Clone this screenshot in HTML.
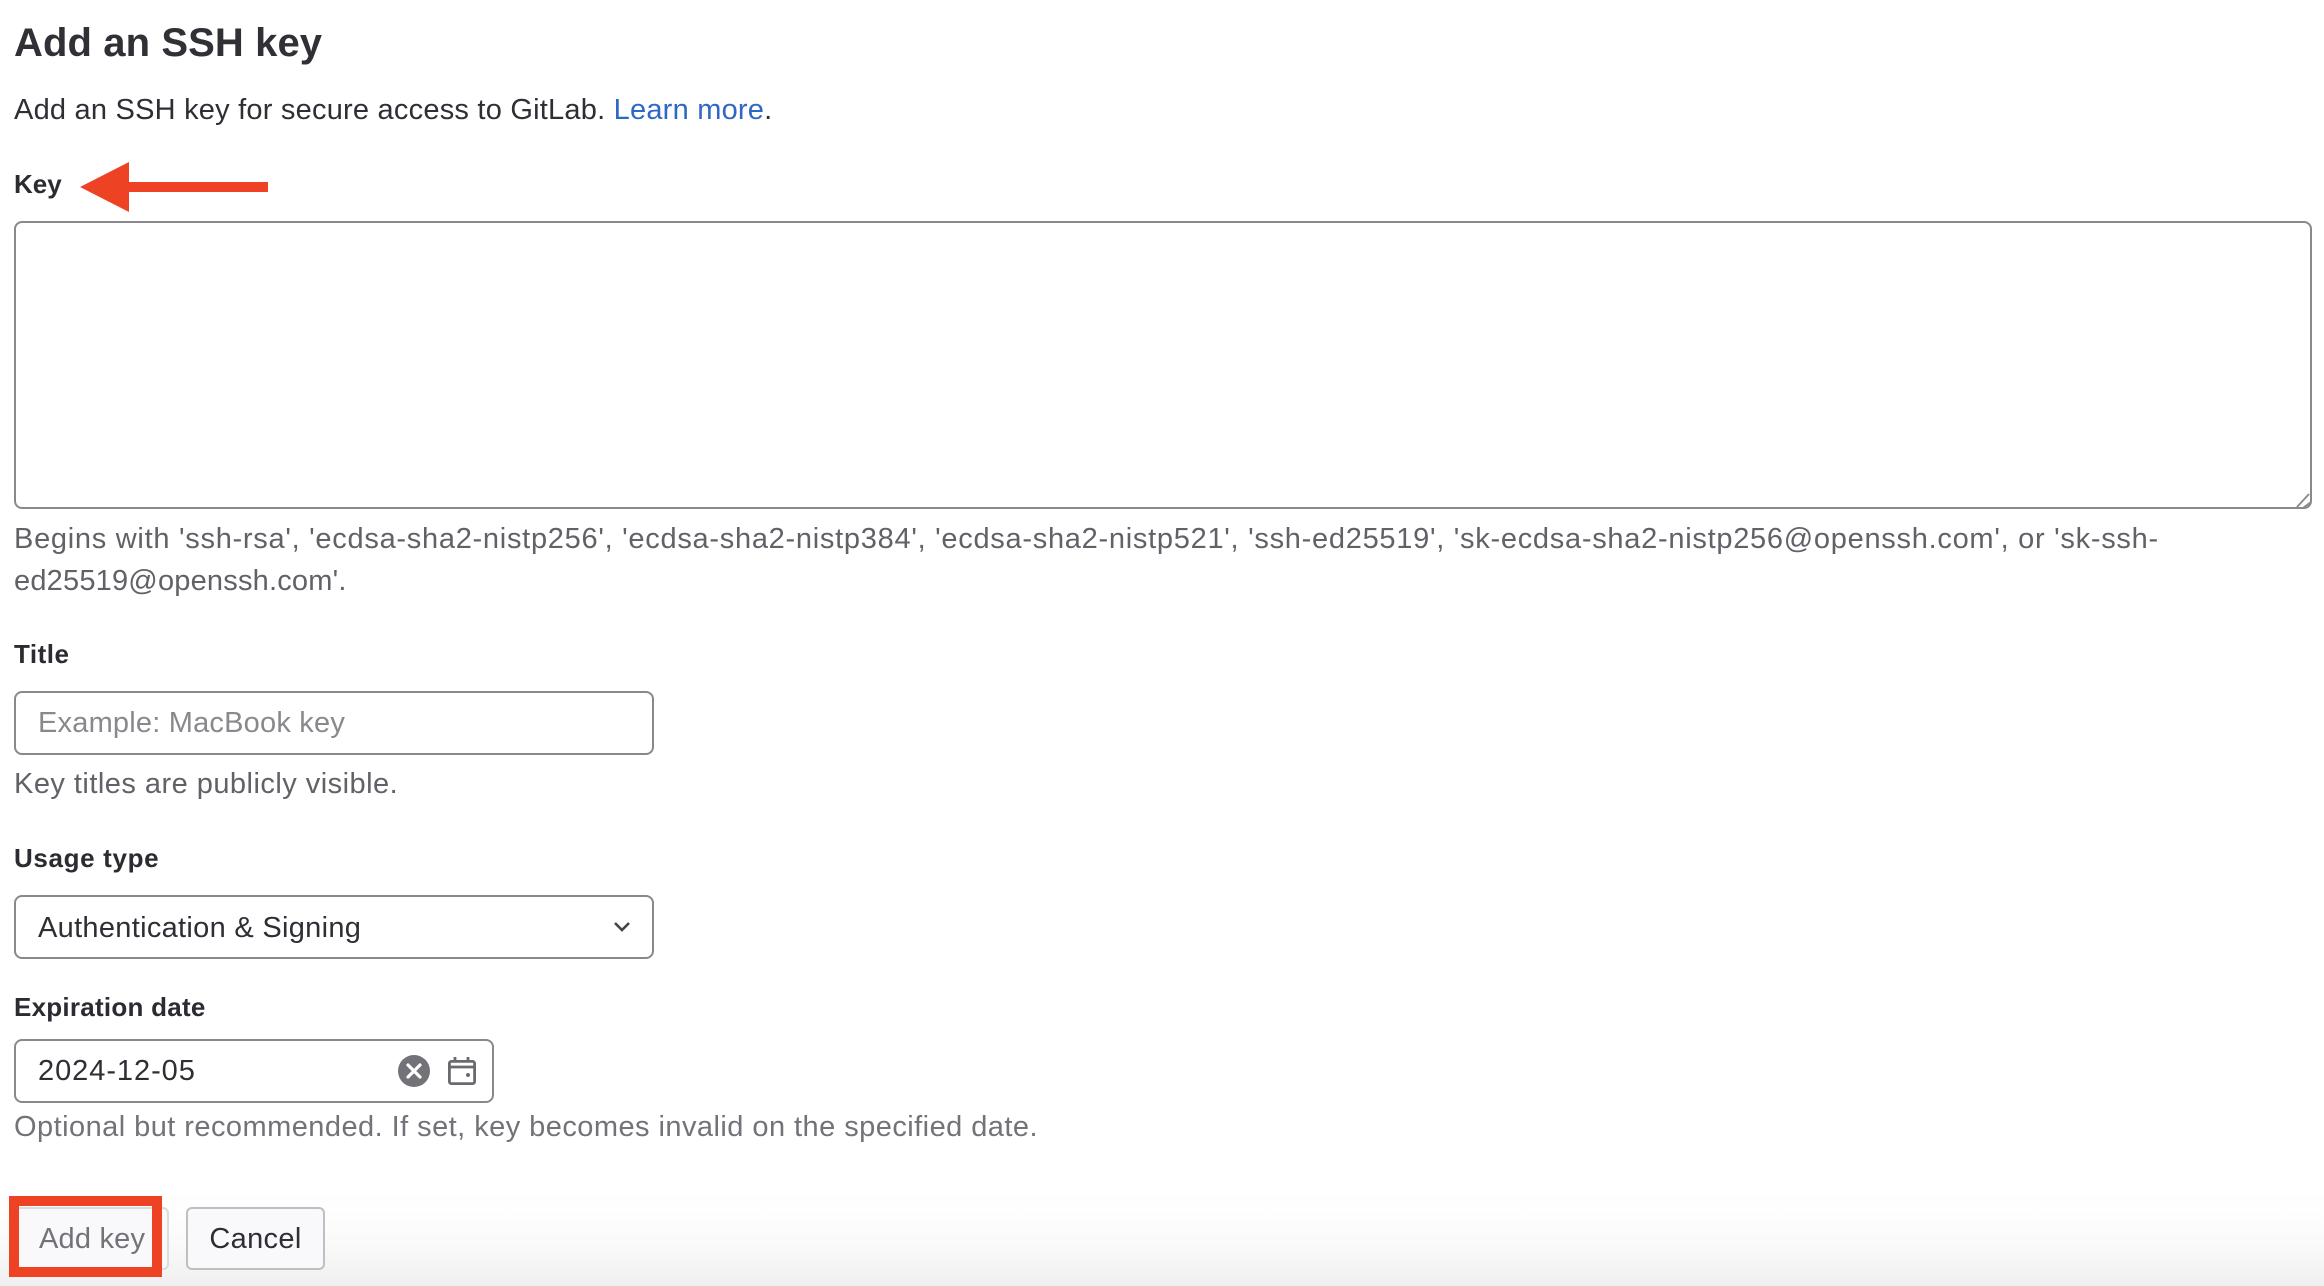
<!DOCTYPE html>
<html lang="en"><head><meta charset="utf-8"><title>Add an SSH key</title>
<style>
*{box-sizing:border-box;margin:0;padding:0}
html,body{width:2324px;height:1286px;overflow:hidden;background:#fff}
body{position:relative;font-family:"Liberation Sans",sans-serif;color:#2f2e35}
.fade{position:absolute;left:0;top:1190px;width:2324px;height:96px;background:linear-gradient(#fff,#fdfdfd 30%,#f9f9f9 60%,#efefef)}
.t{position:absolute;white-space:nowrap;line-height:40px;height:40px;font-size:29px;letter-spacing:.22px}
.l{font-size:26px;font-weight:700;color:#2c2b32}
.h{color:#626168}
h1{position:absolute;left:14px;top:23px;font-size:40px;line-height:40px;font-weight:700;letter-spacing:.1px;white-space:nowrap;color:#303036}
a{color:#2f68c4;text-decoration:none}
textarea,input,select{position:absolute;left:14px;border:2px solid #89888d;border-radius:8px;background:#fff;font:29px "Liberation Sans",sans-serif;letter-spacing:.3px;color:#2f2e35;outline:0;padding:0 22px}
textarea{top:221px;width:2298px;height:288px;resize:none}
input,select{width:640px;height:64px}
input::placeholder{color:#89888d;opacity:1}
select{appearance:none;-webkit-appearance:none;padding-top:2px}
button{position:absolute;top:1207px;height:63px;border-radius:6px;font:29px "Liberation Sans",sans-serif;letter-spacing:.2px;background:#f9f9fb;padding-top:2px}
svg{position:absolute;overflow:visible}
</style></head><body>
<div class="fade"></div>
<h1>Add an SSH key</h1>
<div class="t" style="left:14px;top:90px">Add an SSH key for secure access to GitLab. <a href="#">Learn more</a>.</div>
<label class="t l" style="left:14px;top:164px;letter-spacing:0">Key</label>
<svg style="left:0;top:0" width="300" height="220"><path d="M80 187 129 162V182H268V192H129V212Z" fill="#ee4224"/></svg>
<textarea></textarea>
<svg style="left:2290px;top:488px" width="24" height="24"><path d="M19 6 7 19M21 14 13 20" fill="none" stroke="#89888d" stroke-width="1.8"/></svg>
<div class="t h" style="left:14px;top:519px;letter-spacing:.72px">Begins with 'ssh-rsa', 'ecdsa-sha2-nistp256', 'ecdsa-sha2-nistp384', 'ecdsa-sha2-nistp521', 'ssh-ed25519', 'sk-ecdsa-sha2-nistp256@openssh.com', or 'sk-ssh-</div>
<div class="t h" style="left:14px;top:561px;letter-spacing:.2px">ed25519@openssh.com'.</div>
<label class="t l" style="left:14px;top:634px;letter-spacing:.5px">Title</label>
<input type="text" style="top:691px;letter-spacing:.2px;padding-top:1px" placeholder="Example: MacBook key">
<div class="t h" style="left:14px;top:764px;letter-spacing:.47px">Key titles are publicly visible.</div>
<label class="t l" style="left:14px;top:838px;letter-spacing:.65px">Usage type</label>
<select style="top:895px"><option>Authentication &amp; Signing</option></select>
<svg style="left:612px;top:919px" width="20" height="16" viewBox="0 0 20 16"><path d="M3 4 10 11 17 4" fill="none" stroke="#45444b" stroke-width="2.6"/></svg>
<label class="t l" style="left:14px;top:987px;letter-spacing:.25px">Expiration date</label>
<input type="text" style="top:1039px;width:480px;letter-spacing:.95px" value="2024-12-05">
<svg style="left:398px;top:1055px" width="32" height="32" viewBox="0 0 32 32"><circle cx="16" cy="16" r="16" fill="#737278"/><path d="M10 10 22 22M22 10 10 22" stroke="#fff" stroke-width="3.2" stroke-linecap="round"/></svg>
<svg style="left:448px;top:1057px" width="28" height="28" viewBox="0 0 28 28" fill="none" stroke="#6a696f" stroke-width="2.8"><rect x="1.4" y="4.4" width="25.2" height="22.2" rx="2"/><path d="M1.4 10H26.6M7 0V5M20 0V5"/><circle cx="20" cy="18" r="2" fill="#6a696f" stroke="none"/></svg>
<div class="t h" style="left:14px;top:1107px;letter-spacing:.45px;color:#737278">Optional but recommended. If set, key becomes invalid on the specified date.</div>
<button style="left:14px;width:155px;border:2px solid #dcdcde;color:#737278;text-align:left;padding-left:23px">Add key</button>
<button style="left:186px;width:139px;border:2px solid #bfbfc3;color:#2f2e35;letter-spacing:.35px">Cancel</button>
<svg style="left:0;top:0" width="200" height="1286"><rect x="14" y="1201" width="143" height="71" fill="none" stroke="#ee4224" stroke-width="10"/></svg>
</body></html>
